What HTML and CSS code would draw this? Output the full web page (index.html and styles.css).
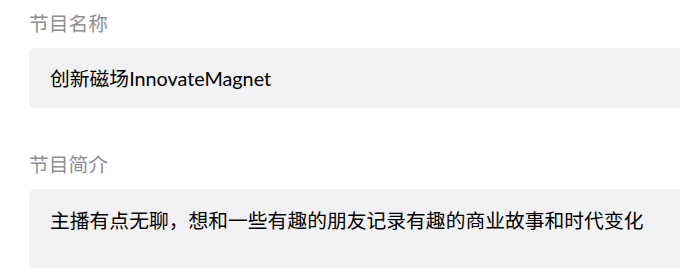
FILE: index.html
```html
<!DOCTYPE html>
<html lang="zh">
<head>
<meta charset="utf-8">
<link rel="stylesheet" href="styles.css">
</head>
<body>
<div class="form">
  <div class="field">
    <div class="label">节目名称</div>
    <div class="input single">创新磁场InnovateMagnet</div>
  </div>
  <div class="field">
    <div class="label">节目简介</div>
    <div class="input multi">主播有点无聊，想和一些有趣的朋友记录有趣的商业故事和时代变化</div>
  </div>
</div>
</body>
</html>
```
FILE: styles.css
```css
html, body {
  margin: 0;
  padding: 0;
  background: #ffffff;
  overflow: hidden;
  width: 680px;
  height: 268px;
}
.form {
  font-family: "Lato", "Noto Sans CJK SC", "Noto Sans", sans-serif;
  padding: 9px 0 0 29px;
  width: 680px;
  display: flex;
  flex-direction: column;
  gap: 42px;
}
.field {
  display: flex;
  flex-direction: column;
  gap: 11px;
}
.label {
  font-size: 19.8px;
  line-height: 28px;
  color: #8e8e93;
}
.input {
  background: #f2f2f4;
  border-radius: 6px 6px 0 0;
  font-size: 19.8px;
  line-height: 28px;
  color: #000000;
  padding: 0 0 0 21px;
  box-sizing: border-box;
}
.single {
  height: 60px;
  display: flex;
  align-items: center;
  border-radius: 6px;
}
.multi {
  padding-top: 17px;
  height: 79px;
}
```
